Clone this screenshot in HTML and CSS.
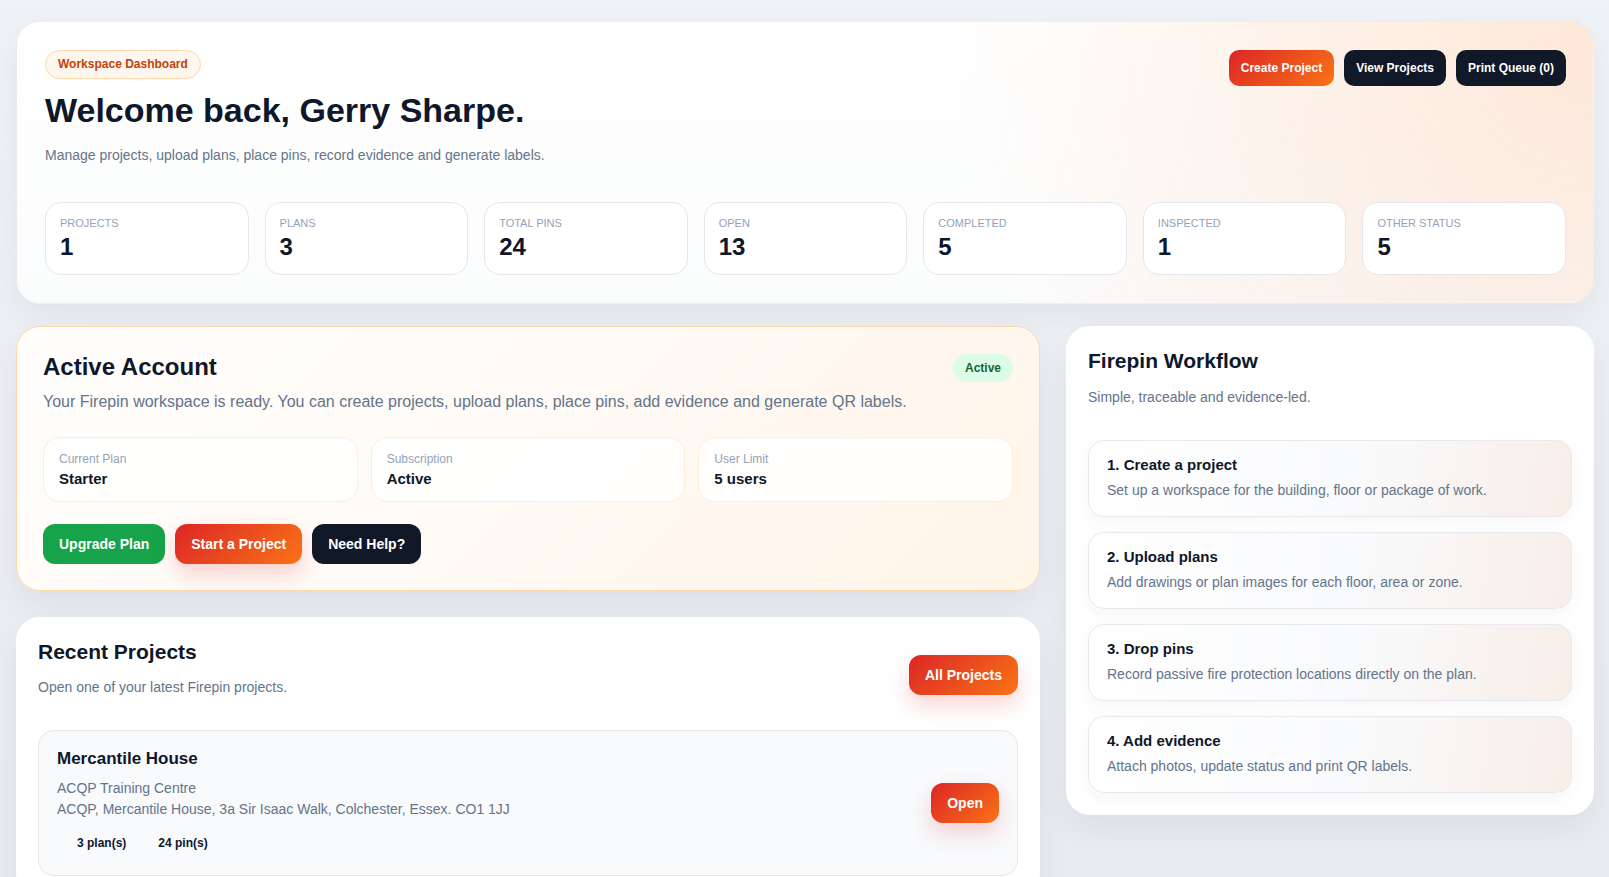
FILE: index.html
```html
<!DOCTYPE html>
<html lang="en">
<head>
  <meta charset="UTF-8" />
  <meta name="viewport" content="width=device-width, initial-scale=1.0" />
  <title>Firepin - Dashboard</title>
  <link rel="stylesheet" href="styles.css">
</head>
<body>

  <div class="page">

    <section class="hero">
      <div class="hero-top">
        <div class="hero-intro">
          <span class="eyebrow">Workspace Dashboard</span>
          <h1>Welcome back, Gerry Sharpe.</h1>
          <p class="muted">Manage projects, upload plans, place pins, record evidence and generate labels.</p>
        </div>
        <div class="hero-actions">
          <a href="#" class="btn btn-sm btn-fire">Create Project</a>
          <a href="#" class="btn btn-sm btn-dark">View Projects</a>
          <a href="#" class="btn btn-sm btn-dark">Print Queue (0)</a>
        </div>
      </div>

      <div class="stats">
        <div class="stat"><span class="stat-label">Projects</span><strong class="stat-value">1</strong></div>
        <div class="stat"><span class="stat-label">Plans</span><strong class="stat-value">3</strong></div>
        <div class="stat"><span class="stat-label">Total Pins</span><strong class="stat-value">24</strong></div>
        <div class="stat"><span class="stat-label">Open</span><strong class="stat-value">13</strong></div>
        <div class="stat"><span class="stat-label">Completed</span><strong class="stat-value">5</strong></div>
        <div class="stat"><span class="stat-label">Inspected</span><strong class="stat-value">1</strong></div>
        <div class="stat"><span class="stat-label">Other Status</span><strong class="stat-value">5</strong></div>
      </div>
    </section>

    <div class="columns">
      <div class="col-main">

        <section class="card account">
          <div class="account-head">
            <div>
              <h2>Active Account</h2>
              <p class="account-text">Your Firepin workspace is ready. You can create projects, upload plans, place pins, add evidence and generate QR labels.</p>
            </div>
            <span class="pill-active">Active</span>
          </div>

          <div class="account-info">
            <div class="info-box">
              <span class="info-label">Current Plan</span>
              <strong class="info-value">Starter</strong>
            </div>
            <div class="info-box">
              <span class="info-label">Subscription</span>
              <strong class="info-value">Active</strong>
            </div>
            <div class="info-box">
              <span class="info-label">User Limit</span>
              <strong class="info-value">5 users</strong>
            </div>
          </div>

          <div class="account-actions">
            <a href="#" class="btn btn-green">Upgrade Plan</a>
            <a href="#" class="btn btn-fire btn-glow">Start a Project</a>
            <a href="#" class="btn btn-dark">Need Help?</a>
          </div>
        </section>

        <section class="card">
          <div class="card-head">
            <div>
              <h2>Recent Projects</h2>
              <p class="muted">Open one of your latest Firepin projects.</p>
            </div>
            <a href="#" class="btn btn-fire btn-glow">All Projects</a>
          </div>

          <div class="project">
            <div class="project-info">
              <h3>Mercantile House</h3>
              <div class="project-meta">
                <div>ACQP Training Centre</div>
                <div>ACQP, Mercantile House, 3a Sir Isaac Walk, Colchester, Essex. CO1 1JJ</div>
              </div>
              <div class="chips">
                <span class="chip">3 plan(s)</span>
                <span class="chip">24 pin(s)</span>
              </div>
            </div>
            <a href="#" class="btn btn-fire btn-glow">Open</a>
          </div>
        </section>

      </div>

      <aside class="card workflow">
        <div class="card-head">
          <div>
            <h2>Firepin Workflow</h2>
            <p class="muted">Simple, traceable and evidence-led.</p>
          </div>
        </div>

        <div class="steps">
          <div class="step">
            <strong>1. Create a project</strong>
            <p>Set up a workspace for the building, floor or package of work.</p>
          </div>
          <div class="step">
            <strong>2. Upload plans</strong>
            <p>Add drawings or plan images for each floor, area or zone.</p>
          </div>
          <div class="step">
            <strong>3. Drop pins</strong>
            <p>Record passive fire protection locations directly on the plan.</p>
          </div>
          <div class="step">
            <strong>4. Add evidence</strong>
            <p>Attach photos, update status and print QR labels.</p>
          </div>
        </div>
      </aside>
    </div>

  </div>

</body>
</html>
```

FILE: styles.css
```css
* {
  box-sizing: border-box;
}
body {
  font-family: "Liberation Sans", Arial, sans-serif;
  background: linear-gradient(180deg, #eef1f5, #e8ecf1);
  color: #0f172a;
  margin: 0;
  padding: 21px 15px 0 16px;
}
h1, h2, h3, p {
  margin: 0;
}
.muted {
  color: #64748b;
  font-size: 14px;
  line-height: 20px;
}

/* buttons */
.btn {
  display: inline-flex;
  align-items: center;
  justify-content: center;
  height: 40px;
  padding: 0 16px;
  border-radius: 12px;
  font-size: 14px;
  font-weight: 700;
  color: #fff;
  text-decoration: none;
  white-space: nowrap;
  flex-shrink: 0;
}
.btn-sm {
  height: 36px;
  padding: 0 12px;
  border-radius: 10px;
  font-size: 12px;
}
.btn-fire {
  background: linear-gradient(135deg, #dc2626, #f97316);
}
.btn-glow {
  box-shadow: 0 10px 22px rgba(220, 38, 38, 0.2);
}
.btn-dark {
  background: #111827;
}
.btn-green {
  background: #16a34a;
}

/* hero */
.hero {
  background:
    radial-gradient(circle at 100% 0%, rgba(249, 115, 22, 0.17), rgba(249, 115, 22, 0) 40%),
    linear-gradient(180deg, #ffffff, #fbfcfd);
  border: 1px solid rgba(226, 232, 240, 0.6);
  border-radius: 24px;
  padding: 28px 27px 28px 28px;
  box-shadow: 0 12px 30px rgba(15, 23, 42, 0.05);
}
.hero-top {
  display: flex;
  justify-content: space-between;
  align-items: flex-start;
}
.eyebrow {
  display: inline-block;
  font-size: 12px;
  line-height: 15px;
  font-weight: 700;
  color: #c2410c;
  background: #fff7ed;
  border: 1px solid #fed7aa;
  border-radius: 999px;
  padding: 6px 12px;
}
.hero h1 {
  font-size: 34px;
  line-height: 1.1;
  font-weight: 700;
  margin-top: 13px;
}
.hero .muted {
  margin-top: 16px;
}
.hero-actions {
  display: flex;
  gap: 10px;
}
.stats {
  display: grid;
  grid-template-columns: repeat(7, minmax(0, 1fr));
  gap: 16px;
  margin-top: 37px;
}
.stat {
  background: #fff;
  border: 1px solid #e5e7eb;
  border-radius: 16px;
  padding: 14px 14px 13px;
  display: flex;
  flex-direction: column;
}
.stat-label {
  font-size: 11px;
  line-height: 13px;
  text-transform: uppercase;
  color: #94a3b8;
}
.stat-value {
  font-size: 24px;
  line-height: 28px;
  margin-top: 3px;
}

/* columns */
.columns {
  display: grid;
  grid-template-columns: minmax(0, 1fr) 528px;
  gap: 26px;
  margin-top: 22px;
  align-items: start;
}
.col-main {
  display: flex;
  flex-direction: column;
  gap: 26px;
}
.card {
  background: #fff;
  border-radius: 24px;
  padding: 22px;
  box-shadow: 0 14px 34px rgba(15, 23, 42, 0.06);
}
.card h2 {
  font-size: 21px;
  line-height: 1.2;
}
.card-head {
  display: flex;
  justify-content: space-between;
  align-items: center;
  margin-bottom: 19px;
}
.card-head .muted {
  margin-top: 13px;
  margin-bottom: 14px;
}

/* account */
.account {
  background: linear-gradient(135deg, #fffefc 0%, #fffaf5 50%, #fff4e8 100%);
  border: 1px solid #fed7aa;
  padding: 26px;
}
.account-head {
  display: flex;
  justify-content: space-between;
  align-items: flex-start;
}
.account h2 {
  font-size: 24px;
  line-height: 1.2;
}
.account-text {
  margin-top: 8px;
  font-size: 16px;
  line-height: 24px;
  color: #64748b;
}
.pill-active {
  font-size: 12px;
  line-height: 16px;
  font-weight: 700;
  color: #166534;
  background: #dcfce7;
  border-radius: 999px;
  padding: 6px 12px;
  margin-top: 1px;
}
.account-info {
  display: grid;
  grid-template-columns: repeat(3, minmax(0, 1fr));
  gap: 13px;
  margin-top: 23px;
}
.info-box {
  background: rgba(255, 255, 255, 0.85);
  border: 1px solid #ffedd5;
  border-radius: 16px;
  padding: 13px 15px;
  display: flex;
  flex-direction: column;
}
.info-label {
  font-size: 12px;
  line-height: 16px;
  color: #94a3b8;
}
.info-value {
  font-size: 15px;
  line-height: 18px;
  margin-top: 3px;
}
.account-actions {
  display: flex;
  gap: 10px;
  margin-top: 22px;
}

/* recent projects */
.project {
  display: flex;
  justify-content: space-between;
  align-items: center;
  background: #f8fafc;
  border: 1px solid #e5e7eb;
  border-radius: 16px;
  padding: 18px;
}
.project h3 {
  font-size: 17px;
  line-height: 1.2;
}
.project-meta {
  margin-top: 8px;
  font-size: 14px;
  line-height: 21px;
  color: #64748b;
}
.chips {
  display: flex;
  gap: 32px;
  padding-left: 20px;
  margin-top: 9px;
}
.chip {
  font-size: 12px;
  line-height: 16px;
  font-weight: 700;
  padding: 6px 0;
}

/* workflow */
.steps {
  display: flex;
  flex-direction: column;
  gap: 15px;
}
.step {
  background: linear-gradient(100deg, #ffffff 0%, #f9fafc 55%, #f8eee8 100%);
  border: 1px solid #e7e9ee;
  border-radius: 16px;
  padding: 15px 18px 16px;
  box-shadow: 0 6px 18px rgba(15, 23, 42, 0.04);
}
.step strong {
  display: block;
  font-size: 15px;
  line-height: 18px;
}
.step p {
  margin-top: 6px;
  font-size: 14px;
  line-height: 20px;
  color: #64748b;
}
```
